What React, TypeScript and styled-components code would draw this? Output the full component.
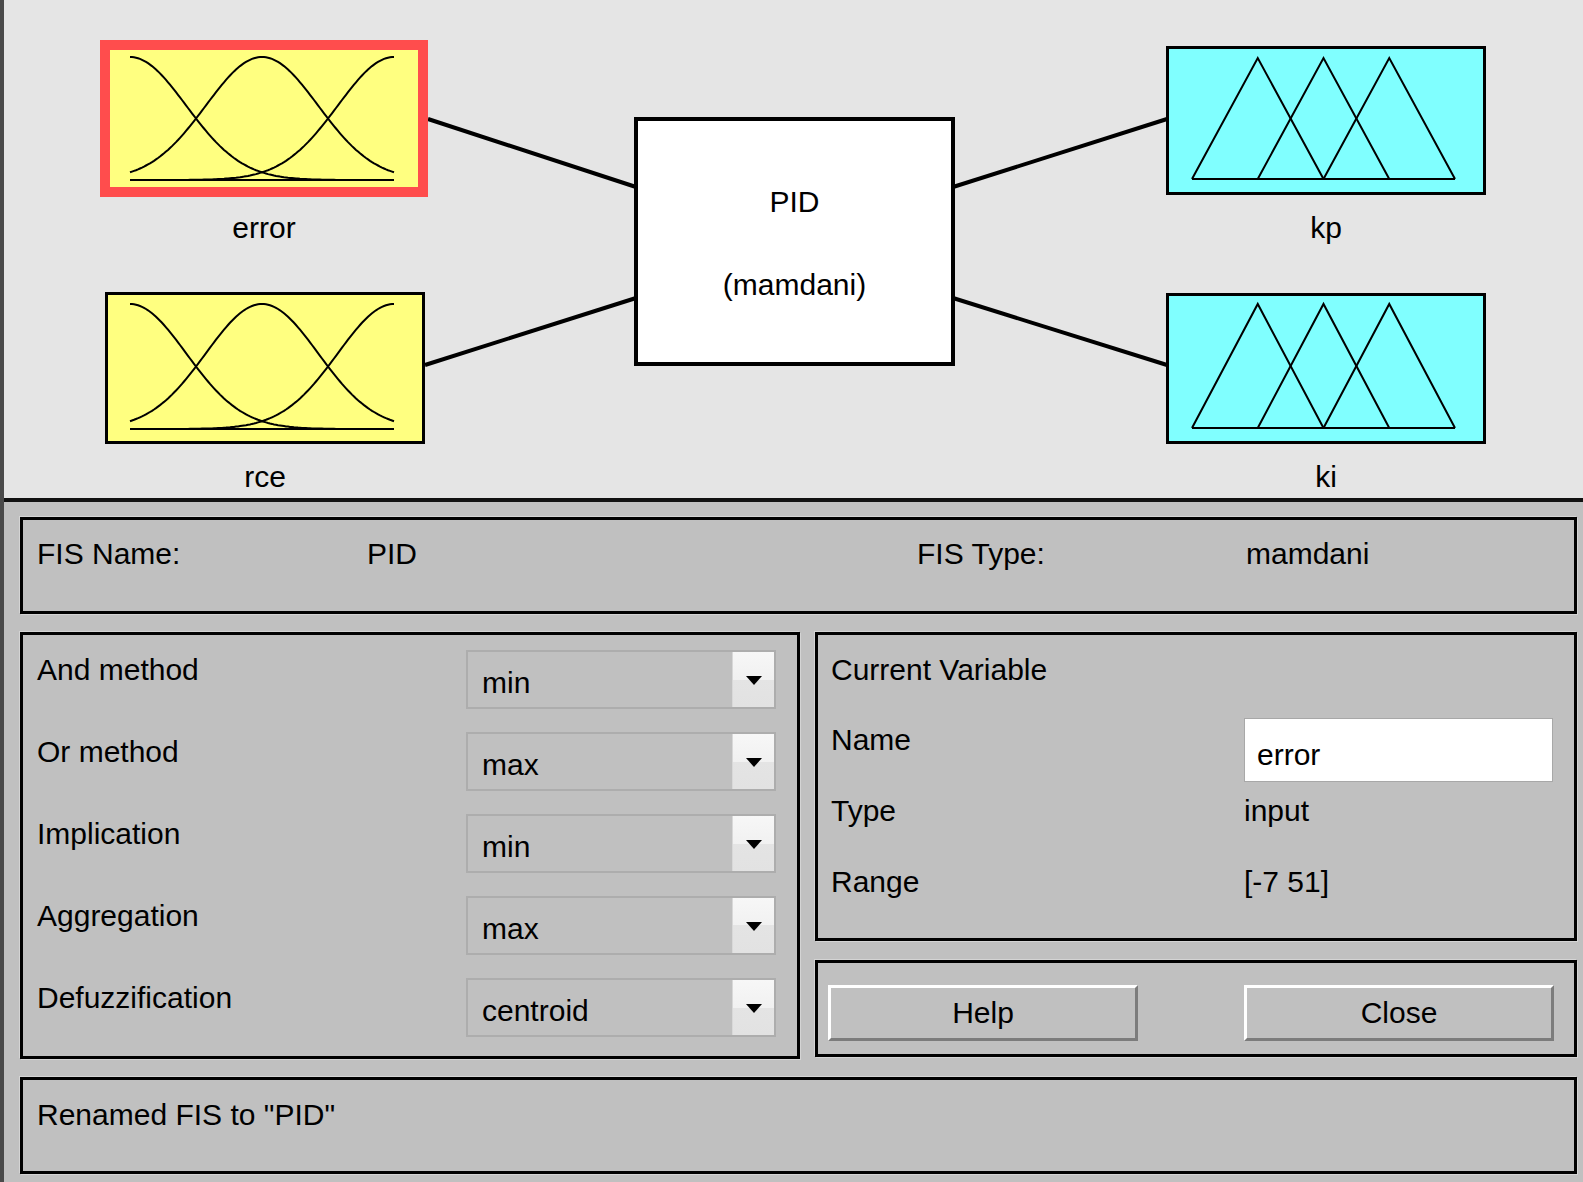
import React from 'react';
import styled, { createGlobalStyle } from 'styled-components';

const GlobalStyle = createGlobalStyle`
  html, body {
    margin: 0;
    padding: 0;
  }
  body {
    background: #c0c0c0;
    font-family: "Liberation Sans", Arial, sans-serif;
    color: #000;
  }
`;

const Window = styled.div`
  width: 1583px;
  height: 1182px;
  box-sizing: border-box;
  border-left: 4px solid #4a4a4a;
  display: flex;
  flex-direction: column;
  background: #c0c0c0;
  overflow: hidden;
`;

/* ---------- diagram ---------- */

const Canvas = styled.div`
  position: relative;
  flex: none;
  height: 498px;
  background: #e5e5e5;
  border-bottom: 4px solid #111;
`;

const Wires = styled.svg`
  position: absolute;
  left: 0;
  top: 0;
  width: 100%;
  height: 100%;
`;

const Node = styled.div<{ $x: number; $y: number }>`
  position: absolute;
  left: ${p => p.$x}px;
  top: ${p => p.$y}px;
  display: flex;
  flex-direction: column;
  align-items: center;
`;

const VarBox = styled.div<{ $fill: string; $w: number; $h: number; $selected?: boolean }>`
  box-sizing: border-box;
  width: ${p => p.$w}px;
  height: ${p => p.$h}px;
  background: ${p => p.$fill};
  border: ${p => (p.$selected ? '10px solid #ff4d4d' : '3px solid #000')};
  svg {
    display: block;
  }
`;

const NodeLabel = styled.div<{ $gap?: number }>`
  margin-top: ${p => p.$gap ?? 14}px;
  font-size: 30px;
  line-height: 34px;
`;

const SystemBox = styled.div`
  box-sizing: border-box;
  width: 321px;
  height: 249px;
  background: #fff;
  border: 4px solid #000;
  display: flex;
  flex-direction: column;
  align-items: center;
  padding-top: 64px;
  gap: 49px;
  font-size: 30px;
  line-height: 34px;
`;

type PlotProps = {
  kind: 'gauss' | 'tri';
  w: number;
  h: number;
  x0: number;
  x1: number;
  top: number;
  base: number;
};

const MfPlot = ({ kind, w, h, x0, x1, top, base }: PlotProps) => {
  const amp = base - top;
  const paths: string[] = [];
  if (kind === 'gauss') {
    const half = (x1 - x0) / 2;
    const sigma = half / 2 / 1.1774;
    [x0, x0 + half, x1].forEach(c => {
      const pts: string[] = [];
      for (let x = x0; x <= x1 + 0.01; x += 2) {
        const y = base - amp * Math.exp(-((x - c) ** 2) / (2 * sigma * sigma));
        pts.push(`${x.toFixed(1)},${y.toFixed(1)}`);
      }
      paths.push('M' + pts.join(' L'));
    });
  } else {
    const s = (x1 - x0) / 4;
    for (let i = 0; i < 3; i++) {
      const a = x0 + i * s;
      paths.push(`M${a},${base} L${a + s},${top} L${a + 2 * s},${base}`);
    }
  }
  return (
    <svg width={w} height={h} viewBox={`0 0 ${w} ${h}`}>
      <path d={`M${x0},${base} L${x1},${base}`} stroke="#000" strokeWidth={2} fill="none" />
      {paths.map((d, i) => (
        <path key={i} d={d} stroke="#000" strokeWidth={2} fill="none" />
      ))}
    </svg>
  );
};

/* ---------- controls ---------- */

const Controls = styled.div`
  flex: 1;
  display: flex;
  flex-direction: column;
  gap: 18px;
  padding: 15px 6px 8px 16px;
  font-size: 30px;
  line-height: 34px;
`;

const Panel = styled.div<{ $h: number }>`
  box-sizing: border-box;
  height: ${p => p.$h}px;
  border: 3px solid #000;
  background: #c0c0c0;
  box-shadow: 1px 1px 0 #d4d4d4, -1px -1px 0 #d4d4d4;
`;

const InfoPanel = styled(Panel)`
  display: grid;
  grid-template-columns: 330px 550px 329px 1fr;
  padding: 17px 14px 0;
`;

const Middle = styled.div`
  display: grid;
  grid-template-columns: 780px 762px;
  column-gap: 15px;
  height: 427px;
`;

const MethodPanel = styled(Panel)`
  display: flex;
  flex-direction: column;
  gap: 23px;
  padding: 15px 0 0 14px;
`;

const MethodRow = styled.div`
  display: grid;
  grid-template-columns: 429px 310px;
  align-items: start;
`;

const MethodLabel = styled.div`
  padding-top: 3px;
`;

const Dropdown = styled.div`
  box-sizing: border-box;
  height: 59px;
  display: flex;
  align-items: stretch;
  justify-content: space-between;
  border: 2px solid #adadad;
  background: #c0c0c0;
`;

const DropValue = styled.span`
  padding: 12px 0 0 14px;
  line-height: 38px;
`;

const DropArrow = styled.span`
  width: 41px;
  display: flex;
  align-items: center;
  justify-content: center;
  background: linear-gradient(#f7f7f7 0, #f1f1f1 50%, #e4e4e4 50%, #e2e2e2 100%);
  border-left: 1px solid #d8d8d8;
  &::after {
    content: '';
    width: 0;
    height: 0;
    margin-top: 2px;
    border-left: 8px solid transparent;
    border-right: 8px solid transparent;
    border-top: 9px solid #000;
  }
`;

const RightColumn = styled.div`
  display: flex;
  flex-direction: column;
  gap: 19px;
`;

const VarPanel = styled(Panel)`
  padding: 18px 0 0 13px;
`;

const VarGrid = styled.div`
  margin-top: 31px;
  display: grid;
  grid-template-columns: 413px 309px;
  grid-auto-rows: 71px;
  align-items: start;
`;

const VarCell = styled.div`
  padding-top: 5px;
`;

const NameInput = styled.div`
  box-sizing: border-box;
  height: 64px;
  background: #fff;
  border: 1px solid #a8a8a8;
  padding: 19px 0 0 12px;
`;

const ButtonPanel = styled(Panel)`
  display: grid;
  grid-template-columns: 310px 310px;
  column-gap: 106px;
  align-items: start;
  padding: 22px 0 0 10px;
`;

const Btn = styled.button`
  box-sizing: border-box;
  height: 56px;
  margin: 0;
  padding: 0;
  background: #c0c0c0;
  border-style: solid;
  border-width: 3px;
  border-color: #fff #7c7c7c #7c7c7c #fff;
  font: inherit;
  color: #000;
`;

const StatusPanel = styled(Panel)`
  padding: 18px 14px 0;
`;

const methods: [string, string][] = [
  ['And method', 'min'],
  ['Or method', 'max'],
  ['Implication', 'min'],
  ['Aggregation', 'max'],
  ['Defuzzification', 'centroid'],
];

export default function App() {
  return (
    <>
      <GlobalStyle />
      <Window>
        <Canvas>
          <Wires>
            <g stroke="#000" strokeWidth={4}>
              <line x1={424} y1={119} x2={632} y2={187} />
              <line x1={421} y1={365} x2={632} y2={298} />
              <line x1={949} y1={187} x2={1163} y2={119} />
              <line x1={949} y1={298} x2={1163} y2={365} />
            </g>
          </Wires>

          <Node $x={96} $y={40}>
            <VarBox $fill="#ffff80" $w={328} $h={157} $selected>
              <MfPlot kind="gauss" w={308} h={137} x0={20} x1={284} top={7} base={130} />
            </VarBox>
            <NodeLabel>error</NodeLabel>
          </Node>
          <Node $x={101} $y={292}>
            <VarBox $fill="#ffff80" $w={320} $h={152}>
              <MfPlot kind="gauss" w={314} h={146} x0={22} x1={286} top={9} base={134} />
            </VarBox>
            <NodeLabel $gap={16}>rce</NodeLabel>
          </Node>

          <Node $x={630} $y={117}>
            <SystemBox>
              <span>PID</span>
              <span>(mamdani)</span>
            </SystemBox>
          </Node>

          <Node $x={1162} $y={46}>
            <VarBox $fill="#80ffff" $w={320} $h={149}>
              <MfPlot kind="tri" w={314} h={143} x0={23} x1={286} top={9} base={130} />
            </VarBox>
            <NodeLabel $gap={16}>kp</NodeLabel>
          </Node>
          <Node $x={1162} $y={293}>
            <VarBox $fill="#80ffff" $w={320} $h={151}>
              <MfPlot kind="tri" w={314} h={145} x0={23} x1={286} top={8} base={132} />
            </VarBox>
            <NodeLabel $gap={16}>ki</NodeLabel>
          </Node>
        </Canvas>

        <Controls>
          <InfoPanel $h={97}>
            <span>FIS Name:</span>
            <span>PID</span>
            <span>FIS Type:</span>
            <span>mamdani</span>
          </InfoPanel>

          <Middle>
            <MethodPanel $h={427}>
              {methods.map(([label, value]) => (
                <MethodRow key={label}>
                  <MethodLabel>{label}</MethodLabel>
                  <Dropdown>
                    <DropValue>{value}</DropValue>
                    <DropArrow />
                  </Dropdown>
                </MethodRow>
              ))}
            </MethodPanel>

            <RightColumn>
              <VarPanel $h={309}>
                <div>Current Variable</div>
                <VarGrid>
                  <VarCell>Name</VarCell>
                  <NameInput>error</NameInput>
                  <VarCell>Type</VarCell>
                  <VarCell>input</VarCell>
                  <VarCell>Range</VarCell>
                  <VarCell>[-7 51]</VarCell>
                </VarGrid>
              </VarPanel>
              <ButtonPanel $h={97}>
                <Btn>Help</Btn>
                <Btn>Close</Btn>
              </ButtonPanel>
            </RightColumn>
          </Middle>

          <StatusPanel $h={97}>Renamed FIS to "PID"</StatusPanel>
        </Controls>
      </Window>
    </>
  );
}
